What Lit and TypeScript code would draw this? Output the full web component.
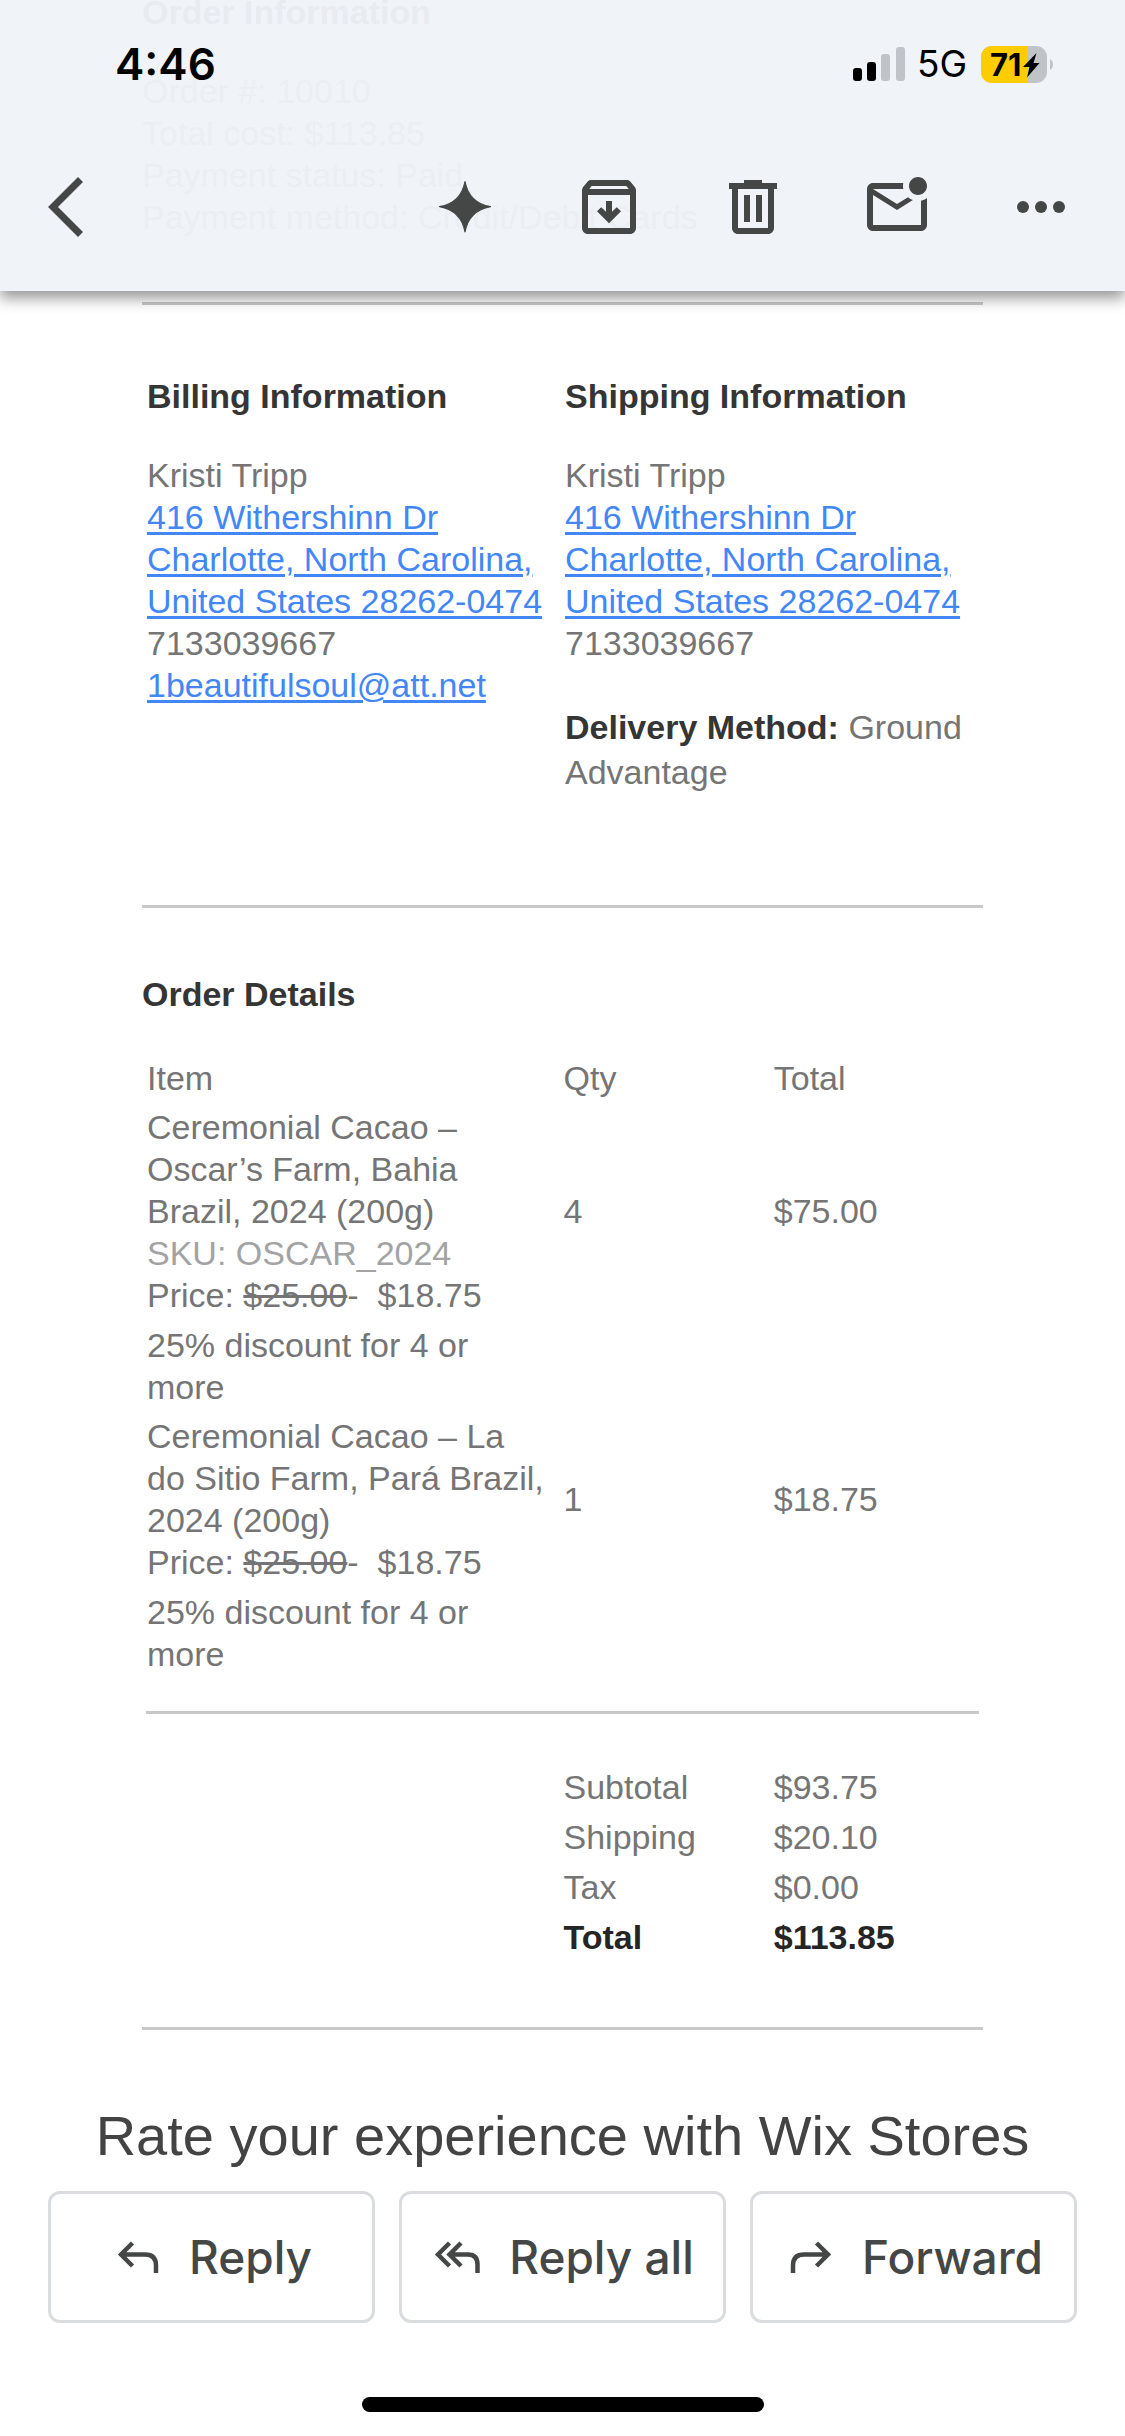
import { LitElement, html, css, svg } from "lit";
import { customElement } from "lit/decorators.js";

interface OrderItem {
  name: string;
  sku?: string;
  listPrice: string;
  price: string;
  discount: string;
  qty: number;
  total: string;
}

const ITEMS: OrderItem[] = [
  {
    name: "Ceremonial Cacao – Oscar’s Farm, Bahia Brazil, 2024 (200g)",
    sku: "OSCAR_2024",
    listPrice: "$25.00",
    price: "$18.75",
    discount: "25% discount for 4 or more",
    qty: 4,
    total: "$75.00",
  },
  {
    name: "Ceremonial Cacao – La do Sitio Farm, Pará Brazil, 2024 (200g)",
    listPrice: "$25.00",
    price: "$18.75",
    discount: "25% discount for 4 or more",
    qty: 1,
    total: "$18.75",
  },
];

const SUMMARY: [string, string][] = [
  ["Subtotal", "$93.75"],
  ["Shipping", "$20.10"],
  ["Tax", "$0.00"],
];

const TOOLS = [
  { label: "Summarize", shape: svg`<path d="M12 3.500C12.9 8.300 15.600 11 20.500 11.900C15.600 12.800 12.900 15.500 12 20.300C11.100 15.500 8.400 12.800 3.500 11.900C8.400 11 11.100 8.300 12 3.500z" stroke="currentColor" stroke-width=".4" stroke-linejoin="round"/>` },
  { label: "Archive", shape: svg`<path fill-rule="evenodd" d="M20.54 5.23l-1.39-1.68C18.88 3.21 18.47 3 18 3H6c-.47 0-.88.21-1.16.55L3.46 5.23C3.17 5.57 3 6.02 3 6.5V19c0 1.1.9 2 2 2h14c1.1 0 2-.9 2-2V6.5c0-.48-.17-.93-.46-1.27zM6.24 5h11.52l.83 1H5.42l.82-1zM5 19V8h14v11H5z"/><path d="M13 10h-2v3.6l-1.6-1.5L8 13.4l4 4 4-4-1.4-1.3-1.6 1.5z"/>` },
  { label: "Delete", shape: svg`<path fill-rule="evenodd" d="M15 4V3H9v1H4v2h1v13c0 1.1.9 2 2 2h10c1.1 0 2-.9 2-2V6h1V4h-5zm2 15H7V6h10v13zM9 8h2v9H9zm4 0h2v9h-2z"/>` },
  { label: "Mark as unread", shape: svg`<path d="M22 8.98V18c0 1.1-.9 2-2 2H4c-1.1 0-2-.9-2-2V6c0-1.1.9-2 2-2h10.1c-.06.32-.1.66-.1 1s.04.68.1 1H4l8 5 3.67-2.29c.47.43 1.02.76 1.63.98L12 13 4 8v10h16V9.9c.74-.15 1.42-.48 2-.92zM16 5c0 1.66 1.34 3 3 3s3-1.34 3-3-1.34-3-3-3-3 1.34-3 3z"/>` },
  { label: "More", shape: svg`<circle cx="6" cy="12" r="2"/><circle cx="12" cy="12" r="2"/><circle cx="18" cy="12" r="2"/>` },
];

const REPLIES = [
  { label: "Reply", shape: svg`<path d="M21.5 13L10 24.5L21.5 36M10 24.5H34Q45 24.5 45 35.5V43"/>` },
  { label: "Reply all", shape: svg`<path d="M18.5 13L7 24.5L18.5 36M30 13L18.5 24.5L30 36M18.5 24.5H37Q46.500 24.5 46.500 34.5V43"/>` },
  { label: "Forward", shape: svg`<path d="M32.500 13L44 24.5L32.500 36M44 24.5H20Q9 24.5 9 35.5V43"/>` },
];

@customElement("status-bar")
class StatusBar extends LitElement {
  static styles = css`
    :host {
      display: flex;
      align-items: center;
      justify-content: space-between;
      height: 56px;
      padding: 36px 72px 0 115px;
      color: #000;
      font-family: Inter, "Liberation Sans", sans-serif;
    }
    .time { font-size: 44px; font-weight: 600; line-height: 56px; }
    .right { display: flex; align-items: center; }
    .signal { width: 52px; height: 34px; display: block; }
    .network { margin: 0 14px 0 12px; font-size: 37px; line-height: 56px; }
    .battery { position: relative; display: block; width: 72px; height: 37px; }
    .battery svg { display: block; width: 72px; height: 37px; }
    .level {
      position: absolute;
      left: 9px;
      top: 0;
      font-size: 31px;
      font-weight: 700;
      line-height: 37px;
    }
  `;

  render() {
    return html`
      <span class="time">4:46</span>
      <div class="right">
        <svg class="signal" viewBox="0 0 52 34" aria-hidden="true">
          <rect x="0" y="21" width="9" height="13" rx="3" />
          <rect x="14" y="15" width="9" height="19" rx="3" />
          <rect x="28" y="7" width="9" height="27" rx="3" fill="#c0c3c8" />
          <rect x="43" y="0" width="9" height="34" rx="3" fill="#c0c3c8" />
        </svg>
        <span class="network">5G</span>
        <span class="battery">
          <svg viewBox="0 0 72 37" aria-hidden="true">
            <rect width="66" height="37" rx="11" fill="#c0c3c8" />
            <path d="M11 0H47V37H11A11 11 0 0 1 0 26V11A11 11 0 0 1 11 0z" fill="#ffcc00" />
            <path d="M69 13q3 2 3 5.500t-3 5.500z" fill="#c0c3c8" />
            <path d="M55.500 7L42 21H48.500L46 31.500L58.500 17H52.500z" />
          </svg>
          <span class="level">71</span>
        </span>
      </div>
    `;
  }
}

@customElement("app-root")
class AppRoot extends LitElement {
  static styles = css`
    :host {
      display: block;
      background: #fff;
      font-family: "Liberation Sans", Arial, sans-serif;
      color: #757575;
      font-size: 34px;
      line-height: 42px;
    }
    .screen {
      position: relative;
      display: flex;
      flex-direction: column;
      min-height: 100vh;
      overflow: hidden;
    }
    .top {
      position: absolute;
      inset: 0 0 auto 0;
      background: rgba(239, 242, 248, 0.96);
      box-shadow: 0 7px 14px rgba(0, 0, 0, 0.42);
    }
    .toolbar {
      display: flex;
      align-items: center;
      gap: 72px;
      padding: 79px 48px 48px;
    }
    .tool {
      border: 0;
      padding: 0;
      background: none;
      color: #444746;
      display: block;
    }
    .tool svg { display: block; width: 72px; height: 72px; fill: currentColor; }
    .back { margin-right: auto; }
    .mail { padding: 0 142px; margin-top: -9px; }
    h2, p, address { margin: 0; font: inherit; }
    h2 { font-weight: 700; color: #353535; margin-bottom: 37px; }
    hr { border: 0; height: 3px; margin: 0; background: #c9c9c9; }
    strong { color: #353535; }
    a {
      color: #4387f6;
      text-decoration: underline;
      text-decoration-thickness: 3px;
      text-underline-offset: 3px;
    }
    .order { padding-bottom: 64px; }
    .contacts {
      display: grid;
      grid-template-columns: 1fr 1fr;
      padding: 70px 0 110px 5px;
    }
    .delivery { margin-top: 41px; line-height: 45px; }
    .details { padding: 65px 0; }
    table {
      width: calc(100% - 8px);
      margin: 0 4px;
      border-collapse: collapse;
      table-layout: fixed;
    }
    .wide { width: 50%; }
    .narrow { width: 25%; }
    th, td {
      padding: 4px 0 4px 1px;
      text-align: left;
      font-weight: 400;
      vertical-align: middle;
    }
    th:last-child, td:last-child { padding-left: 3px; }
    .details h2 { margin-bottom: 38px; }
    .details .heading { padding-bottom: 3px; }
    .about { padding-right: 14px; }
    .discount { padding-bottom: 3px; }
    .sku { color: #a3a3a3; }
    .divider { margin: 33px 4px 48px; }
    .grand th, .grand td { color: #252525; font-weight: 700; }
    .rate {
      margin: 74px 0 23px;
      text-align: center;
      color: #434343;
      font-size: 56px;
      line-height: 64px;
    }
    .replies {
      display: grid;
      grid-template-columns: repeat(3, 1fr);
      gap: 24px;
      padding: 0 48px;
    }
    .reply {
      display: flex;
      align-items: center;
      justify-content: center;
      gap: 24px;
      height: 132px;
      padding: 0;
      border: 3px solid #dbdce0;
      border-radius: 12px;
      background: #fff;
      color: #444746;
      font-family: Inter, "Liberation Sans", sans-serif;
      font-size: 46px;
      font-weight: 500;
      line-height: 56px;
      white-space: nowrap;
    }
    .reply svg {
      width: 54px;
      height: 54px;
      flex: none;
      fill: none;
      stroke: currentColor;
      stroke-width: 4.5;
    }
    .home {
      width: 402px;
      height: 15px;
      margin: 74px auto 24px;
      border-radius: 8px;
      background: #000;
    }
  `;

  private address() {
    return html`
      Kristi Tripp<br />
      <a href="#map">416 Withershinn Dr<br />Charlotte, North Carolina,<br />United States 28262-0474</a><br />
      7133039667
    `;
  }

  private item(item: OrderItem) {
    return html`
      <tr>
        <td class="about">
          ${item.name}
          ${item.sku ? html`<div class="sku">SKU: ${item.sku}</div>` : ""}
          <div>Price: <s>${item.listPrice}</s>-&nbsp; ${item.price}</div>
        </td>
        <td>${item.qty}</td>
        <td>${item.total}</td>
      </tr>
      <tr>
        <td class="about discount">${item.discount}</td>
        <td></td>
        <td></td>
      </tr>
    `;
  }

  render() {
    return html`
      <div class="screen">
        <main class="mail">
          <section class="order">
            <h2>Order Information</h2>
            <p>Order #: 10010</p>
            <p>Total cost: $113.85</p>
            <p>Payment status: Paid</p>
            <p>Payment method: Credit/Debit Cards</p>
          </section>
          <hr />
          <div class="contacts">
            <section>
              <h2>Billing Information</h2>
              <address>
                ${this.address()}<br />
                <a href="mailto:1beautifulsoul@att.net">1beautifulsoul@att.net</a>
              </address>
            </section>
            <section>
              <h2>Shipping Information</h2>
              <address>${this.address()}</address>
              <p class="delivery"><strong>Delivery Method:</strong> Ground Advantage</p>
            </section>
          </div>
          <hr />
          <section class="details">
            <h2>Order Details</h2>
            <table>
              <colgroup><col class="wide" /><col class="narrow" /><col class="narrow" /></colgroup>
              <thead>
                <tr>
                  <th class="heading" scope="col">Item</th>
                  <th class="heading" scope="col">Qty</th>
                  <th class="heading" scope="col">Total</th>
                </tr>
              </thead>
              <tbody>${ITEMS.map((i) => this.item(i))}</tbody>
            </table>
            <hr class="divider" />
            <table>
              <colgroup><col class="wide" /><col class="narrow" /><col class="narrow" /></colgroup>
              <tbody>
                ${SUMMARY.map(
                  ([label, value]) => html`<tr><td></td><th scope="row">${label}</th><td>${value}</td></tr>`
                )}
                <tr class="grand"><td></td><th scope="row">Total</th><td>$113.85</td></tr>
              </tbody>
            </table>
          </section>
          <hr />
        </main>
        <p class="rate">Rate your experience with Wix Stores</p>
        <div class="replies">
          ${REPLIES.map(
            (r) => html`<button class="reply"><svg viewBox="0 0 54 54" aria-hidden="true">${r.shape}</svg>${r.label}</button>`
          )}
        </div>
        <div class="home"></div>
        <header class="top">
          <status-bar></status-bar>
          <nav class="toolbar">
            <button class="tool back" aria-label="Back">
              <svg viewBox="0 0 72 72" aria-hidden="true">
                <path d="M32.500 8.500L5 36L32.500 63.500" fill="none" stroke="currentColor" stroke-width="7" />
              </svg>
            </button>
            ${TOOLS.map(
              (t) => html`<button class="tool" aria-label=${t.label}><svg viewBox="0 0 24 24" aria-hidden="true">${t.shape}</svg></button>`
            )}
          </nav>
        </header>
      </div>
    `;
  }
}
